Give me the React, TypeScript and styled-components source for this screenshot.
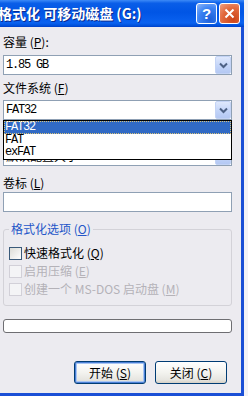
import React from 'react';
import styled, { createGlobalStyle } from 'styled-components';

const GlobalStyle = createGlobalStyle`
  html, body {
    margin: 0;
    padding: 0;
    background: #f2f2f6;
  }
  body {
    font-family: "Noto Sans CJK SC", "Liberation Sans", sans-serif;
    font-size: 12px;
    color: #000;
  }
`;

const Window = styled.div`
  width: 244px;
  height: 396px;
  display: flex;
  flex-direction: column;
  overflow: hidden;
`;

const TitleBar = styled.div`
  flex: none;
  height: 27px;
  display: flex;
  align-items: center;
  gap: 2px;
  padding-right: 4px;
  background: linear-gradient(
    #3d8af7 0%,
    #0a5ee8 12%,
    #0055e5 45%,
    #0a62f0 85%,
    #0052dc 94%,
    #003fc8 100%
  );
`;

const Title = styled.div`
  flex: 1;
  margin-left: -2px;
  color: #fff;
  font-weight: 700;
  font-size: 14px;
  line-height: 27px;
  white-space: nowrap;
  overflow: hidden;
  text-shadow: 1px 1px 0 #0c2a8c;
`;

const CaptionButton = styled.div<{ $close?: boolean }>`
  width: 21px;
  height: 21px;
  box-sizing: border-box;
  border: 1px solid #fff;
  border-radius: 3px;
  display: flex;
  align-items: center;
  justify-content: center;
  color: #fff;
  font-family: "Liberation Sans", sans-serif;
  font-weight: 700;
  font-size: 15px;
  background: ${(p) =>
    p.$close
      ? 'radial-gradient(circle at 70% 80%, #cc4418 0%, #e2693d 55%, #f0a184 100%)'
      : 'radial-gradient(circle at 70% 80%, #1d5fd8 0%, #3b82f3 55%, #8fb8fb 100%)'};
`;

const Body = styled.div`
  flex: 1;
  display: flex;
  flex-direction: column;
  background: #ecebf0;
  border-right: 3px solid #1a4fd6;
  border-bottom: 3px solid #1a4fd6;
  padding: 0 9px 0 3px;
`;

const Label = styled.div<{ $mt: number }>`
  margin-top: ${(p) => p.$mt}px;
  line-height: 14px;
  white-space: nowrap;
`;

const Key = styled.span`
  text-decoration: underline;
`;

const Combo = styled.div<{ $mt: number }>`
  position: relative;
  margin-top: ${(p) => p.$mt}px;
  height: 20px;
  box-sizing: border-box;
  border: 1px solid #8fa0b4;
  background: #fff;
  display: flex;
`;

const ComboText = styled.div<{ $cjk?: boolean }>`
  flex: 1;
  padding-left: 2px;
  line-height: 18px;
  white-space: nowrap;
  overflow: hidden;
  font-family: ${(p) =>
    p.$cjk ? '"Noto Sans CJK SC", sans-serif' : '"Liberation Mono", monospace'};
  font-size: 12px;
  letter-spacing: ${(p) => (p.$cjk ? 0 : -1.2)}px;
`;

const ComboArrow = styled.div`
  width: 16px;
  box-sizing: border-box;
  border: 1px solid #c3d3f5;
  border-radius: 2px;
  background: linear-gradient(#dfe8fc, #c1d3f8 60%, #b4c8f3);
  display: flex;
  align-items: center;
  justify-content: center;
`;

const DropList = styled.div`
  position: absolute;
  z-index: 2;
  top: calc(100% + 1px);
  left: -1px;
  right: -1px;
  border: 1px solid #000;
  background: #fff;
`;

const ListItem = styled.div<{ $selected?: boolean }>`
  height: 12.5px;
  line-height: 12.5px;
  padding-left: 1px;
  font-family: "Liberation Mono", monospace;
  font-size: 12px;
  letter-spacing: -1.2px;
  color: ${(p) => (p.$selected ? '#fff' : '#000')};
  background: ${(p) => (p.$selected ? '#316ac5' : 'transparent')};
  outline: ${(p) => (p.$selected ? '1px dotted #d8c27a' : 'none')};
  outline-offset: -1px;
`;

const TextBox = styled.div`
  margin-top: 2px;
  height: 20px;
  box-sizing: border-box;
  border: 1px solid #8fa0b4;
  background: #fff;
`;

const Group = styled.fieldset`
  margin: 10px 0 0;
  padding: 8px 4px 7px 5px;
  border: 1px solid #d3d2d8;
  border-radius: 3px;
  min-width: 0;
`;

const Legend = styled.legend`
  padding: 0 2px;
  line-height: 14px;
  font-size: 12px;
  color: #2456c8;
`;

const CheckRow = styled.div<{ $disabled?: boolean }>`
  display: flex;
  align-items: flex-start;
  height: 18px;
  line-height: 18px;
  white-space: nowrap;
  color: ${(p) => (p.$disabled ? '#b4b2b8' : '#000')};
`;

const CheckBox = styled.div<{ $disabled?: boolean }>`
  width: 13px;
  height: 13px;
  margin-top: 3px;
  margin-right: 2px;
  box-sizing: border-box;
  border: 1px solid ${(p) => (p.$disabled ? '#d2d0d8' : '#3a5a7a')};
  background: ${(p) =>
    p.$disabled ? '#f4f4f6' : 'linear-gradient(135deg, #dcdcd7, #ffffff)'};
`;

const Progress = styled.div`
  margin-top: 13px;
  height: 14px;
  box-sizing: border-box;
  border: 1px solid #6e6e72;
  border-radius: 3px;
  background: #fff;
`;

const ButtonRow = styled.div`
  margin-top: 28px;
  display: flex;
  justify-content: flex-end;
  gap: 9px;
  padding-right: 5px;
`;

const Button = styled.div<{ $primary?: boolean }>`
  width: 72px;
  height: 23px;
  box-sizing: border-box;
  border: 1px solid #003c74;
  border-radius: 3px;
  display: flex;
  align-items: center;
  justify-content: center;
  white-space: nowrap;
  background: linear-gradient(#ffffff, #f3f3ef 50%, #e6e5e0 85%, #d6d0c5);
  box-shadow: ${(p) =>
    p.$primary ? 'inset 0 0 0 1px #4b7fd6, inset 0 0 0 2px #a9c6f2' : 'none'};
`;

const Chevron = () => (
  <svg width="9" height="7" viewBox="0 0 9 7">
    <path d="M1 1.5 L4.5 5 L8 1.5" fill="none" stroke="#4d6185" strokeWidth="2" />
  </svg>
);

const CloseGlyph = () => (
  <svg width="11" height="11" viewBox="0 0 11 11">
    <path d="M1.5 1.5 L9.5 9.5 M9.5 1.5 L1.5 9.5" stroke="#fff" strokeWidth="2" />
  </svg>
);

const App = () => {
  return (
    <Window>
      <GlobalStyle />
      <TitleBar>
        <Title>格式化 可移动磁盘 (G:)</Title>
        <CaptionButton>?</CaptionButton>
        <CaptionButton $close>
          <CloseGlyph />
        </CaptionButton>
      </TitleBar>
      <Body>
        <Label $mt={8}>
          容量 (<Key>P</Key>):
        </Label>
        <Combo $mt={6}>
          <ComboText>1.85 GB</ComboText>
          <ComboArrow>
            <Chevron />
          </ComboArrow>
        </Combo>
        <Label $mt={6}>
          文件系统 (<Key>F</Key>)
        </Label>
        <Combo $mt={5}>
          <ComboText>FAT32</ComboText>
          <ComboArrow>
            <Chevron />
          </ComboArrow>
          <DropList>
            <ListItem $selected>FAT32</ListItem>
            <ListItem>FAT</ListItem>
            <ListItem>exFAT</ListItem>
          </DropList>
        </Combo>
        <Label $mt={6}>
          分配单元大小 (<Key>A</Key>)
        </Label>
        <Combo $mt={6}>
          <ComboText $cjk>默认配置大小</ComboText>
          <ComboArrow>
            <Chevron />
          </ComboArrow>
        </Combo>
        <Label $mt={10}>
          卷标 (<Key>L</Key>)
        </Label>
        <TextBox />
        <Group>
          <Legend>
            格式化选项 (<Key>O</Key>)
          </Legend>
          <CheckRow>
            <CheckBox />
            快速格式化 (<Key>Q</Key>)
          </CheckRow>
          <CheckRow $disabled>
            <CheckBox $disabled />
            启用压缩 (<Key>E</Key>)
          </CheckRow>
          <CheckRow $disabled>
            <CheckBox $disabled />
            创建一个 MS-DOS 启动盘 (<Key>M</Key>)
          </CheckRow>
        </Group>
        <Progress />
        <ButtonRow>
          <Button $primary>
            开始 (<Key>S</Key>)
          </Button>
          <Button>
            关闭 (<Key>C</Key>)
          </Button>
        </ButtonRow>
      </Body>
    </Window>
  );
};

export default App;
